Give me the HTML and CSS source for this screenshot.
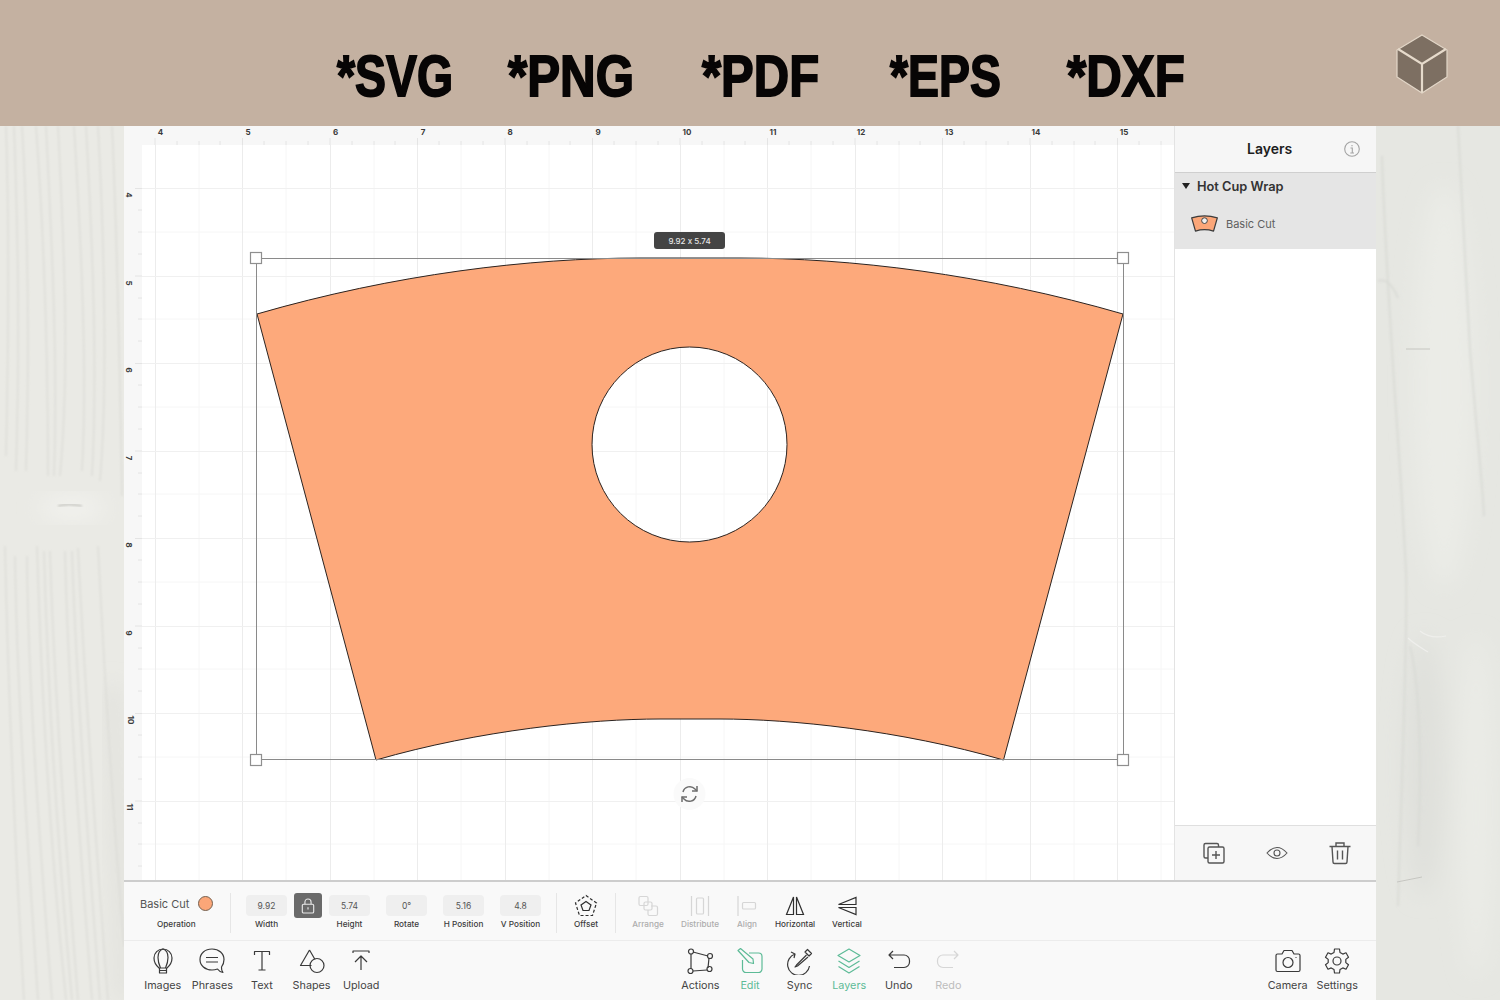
FILE: index.html
```html
<!DOCTYPE html>
<html lang="en">
<head>
<meta charset="utf-8">
<title>Hot Cup Wrap</title>
<link rel="stylesheet" href="styles.css">
</head>
<body>
<header class="banner">
  <span class="format format-svg">*SVG</span>
  <span class="format format-png">*PNG</span>
  <span class="format format-pdf">*PDF</span>
  <span class="format format-eps">*EPS</span>
  <span class="format format-dxf">*DXF</span>
  <svg class="cube" viewBox="0 0 54 60" width="54" height="60">
    <path d="M27 1 52 16 52 43 27 59 2 43 2 16Z" fill="#7d6f62"/>
    <path d="M3 15 27 30 51 15M27 30V59" fill="none" stroke="#e6dacb" stroke-width="2.200"/>
    <path d="M27 1 52 16 52 43 27 59 2 43 2 16Z" fill="none" stroke="#e3d7c8" stroke-width="1.200"/>
  </svg>
</header>
<main class="stage">
  <div class="wood">
    <svg class="wood-art" width="124" height="874" viewBox="0 0 124 874">
      <defs>
        <filter id="soft" x="-20%" y="-5%" width="140%" height="110%"><feGaussianBlur stdDeviation="1.100"/></filter>
        <filter id="soft-wide" x="-80%" y="-20%" width="260%" height="140%"><feGaussianBlur stdDeviation="11"/></filter>
      </defs>
      <rect width="124" height="874" fill="#eaeae5"/>
      <g class="grain" filter="url(#soft)">
        <path d="M6 0C10 120 8 240 6 330M5 420C8 560 14 700 24 874"/>
        <path d="M14 0C18 110 20 210 16 345M15 430C17 570 28 720 38 874"/>
        <path d="M22 0C28 100 30 200 26 345M27 430C28 560 40 720 52 874"/>
        <path d="M36 0C44 110 48 220 48 350M37 420C40 520 48 700 66 874"/>
        <path d="M46 0C52 120 58 240 54 350M44 425C47 540 56 700 72 874"/>
        <path d="M58 0C64 120 70 240 60 350M50 425C54 560 66 720 78 874"/>
        <path d="M74 0C80 100 88 240 82 345M65 425C68 560 80 720 92 874"/>
        <path d="M86 0C92 110 98 240 92 350M72 425C76 550 88 720 100 874"/>
        <path d="M98 0C104 110 108 260 100 355M78 422C84 540 96 720 108 874"/>
        <path d="M112 0C118 130 120 260 122 370M98 420C104 540 114 700 124 820"/>
      </g>
      <path class="grain-shade" d="M112 560C118 660 122 760 124 874" filter="url(#soft-wide)"/>
      <ellipse class="knot-light" cx="72" cy="382" rx="32" ry="12" filter="url(#soft-wide)"/>
      <path class="knot" d="M58 380C64 378 74 378 82 380" filter="url(#soft)"/>
    </svg>
  </div>
  <section class="app">
    <div class="workspace">
      <div class="canvas">
        <svg class="canvas-art" width="1050" height="754" viewBox="124 126 1050 754">
          <rect x="124" y="126" width="1050" height="754" fill="#f7f7f7"/>
          <rect x="142" y="145" width="1032" height="735" fill="#fff"/>
          <g class="grid-minor">
            <path d="M199 145V880M286 145V880M374 145V880M461 145V880M549 145V880M636 145V880M724 145V880M811 145V880M899 145V880M986 145V880M1074 145V880M1161 145V880"/>
            <path d="M142 232H1174M142 319H1174M142 407H1174M142 494H1174M142 582H1174M142 669H1174M142 757H1174M142 844H1174"/>
          </g>
          <g class="grid-major">
            <path d="M155.500 145V880M242.500 145V880M330.500 145V880M417.500 145V880M505.500 145V880M592.500 145V880M680.500 145V880M767.500 145V880M855.500 145V880M942.500 145V880M1030.500 145V880M1117.500 145V880"/>
          </g>
          <g class="grid-rows">
            <path d="M142 188.500H1174M142 276.500H1174M142 363.500H1174M142 451.500H1174M142 538.500H1174M142 626.500H1174M142 713.500H1174M142 801.500H1174"/>
          </g>
          <g class="ticks">
            <path d="M155 138V145M177 141V145M199 141V145M220 141V145M242.500 138V145M264 141V145M286 141V145M308 141V145M330 138V145M352 141V145M374 141V145M395 141V145M417.500 138V145M439 141V145M461 141V145M483 141V145M505 138V145M527 141V145M549 141V145M570 141V145M592.500 138V145M614 141V145M636 141V145M658 141V145M680 138V145M702 141V145M724 141V145M745 141V145M767.500 138V145M789 141V145M811 141V145M833 141V145M855 138V145M877 141V145M899 141V145M920 141V145M942.500 138V145M964 141V145M986 141V145M1008 141V145M1030 138V145M1052 141V145M1074 141V145M1095 141V145M1117.500 138V145M1139 141V145M1161 141V145"/>
            <path d="M135 188.500H142M138 210H142M138 232H142M138 254H142M135 276H142M138 298H142M138 319H142M138 341H142M135 363.500H142M138 385H142M138 407H142M138 429H142M135 451H142M138 473H142M138 494H142M138 516H142M135 538.500H142M138 560H142M138 582H142M138 604H142M135 626H142M138 648H142M138 669H142M138 691H142M135 713.500H142M138 735H142M138 757H142M138 779H142M135 801H142M138 823H142M138 844H142M138 866H142"/>
          </g>
          <g class="ruler-x">
            <text x="160.500" y="135">4</text><text x="248" y="135">5</text><text x="335.500" y="135">6</text><text x="423" y="135">7</text><text x="510" y="135">8</text><text x="598" y="135">9</text><text x="687" y="135">10</text><text x="773" y="135">11</text><text x="861" y="135">12</text><text x="949" y="135">13</text><text x="1036" y="135">14</text><text x="1124" y="135">15</text>
          </g>
          <g class="ruler-y">
            <text transform="translate(126 195) rotate(90)">4</text><text transform="translate(126 283) rotate(90)">5</text><text transform="translate(126 370) rotate(90)">6</text><text transform="translate(126 458) rotate(90)">7</text><text transform="translate(126 545) rotate(90)">8</text><text transform="translate(126 633) rotate(90)">9</text><text transform="translate(128 720) rotate(90)">10</text><text transform="translate(127 807) rotate(90)">11</text>
          </g>
          <path class="wrap" fill-rule="evenodd" d="M257 314C395 274 530 258 640 258H740C850 258 985 274 1123 314L1003.500 760C900 730 790 719 720 719H660C590 719 480 730 376 760ZM592 444.500A97.500 97.500 0 1 0 787 444.500A97.500 97.500 0 1 0 592 444.500Z"/>
          <g class="frame">
            <rect x="256.500" y="258.500" width="867" height="501"/>
            <rect class="handle" x="250.500" y="252.500" width="11" height="11"/>
            <rect class="handle" x="1117.500" y="252.500" width="11" height="11"/>
            <rect class="handle" x="250.500" y="754.500" width="11" height="11"/>
            <rect class="handle" x="1117.500" y="754.500" width="11" height="11"/>
          </g>
          <rect class="size-chip" x="654" y="232" width="71" height="17" rx="3"/>
          <text class="size-text" x="689.500" y="243.800">9.92 x 5.74</text>
          <circle class="rotate-halo" cx="689.500" cy="794" r="16"/>
          <g class="rotate-icon">
            <path d="M683 792A7 7 0 0 1 695 789L697 791M696 796A7 7 0 0 1 684 799L682 797"/>
            <path d="M697 786V791H692M682 802V797H687"/>
          </g>
        </svg>
      </div>
      <aside class="layers">
        <div class="layers-head">
          <h2 class="layers-title">Layers</h2>
          <svg class="info" viewBox="0 0 16 16" width="16" height="16">
            <circle cx="8" cy="8" r="7.300"/>
            <path d="M6.500 7H8.300V12M6.300 12H10M8 4V5.200"/>
          </svg>
        </div>
        <div class="group">
          <div class="group-row"><span class="caret"></span><span class="group-name">Hot Cup Wrap</span></div>
          <div class="layer-row">
            <svg viewBox="0 0 30 20" width="29" height="19">
              <path d="M1.500 4C10 1.500 20 1.500 28.500 4L24.500 18C18 16 12 16 5.500 18Z" fill="#fba678" stroke="#3b3b3b" stroke-width="1.300" stroke-linejoin="round"/>
              <circle cx="15" cy="7" r="3" fill="#f1f1f1" stroke="#3b3b3b" stroke-width="1"/>
            </svg>
            <span class="layer-name">Basic Cut</span>
          </div>
        </div>
        <div class="layers-empty"></div>
        <div class="layers-foot">
          <svg class="icon" viewBox="0 0 24 24" width="24" height="24">
            <path d="M6 17H3.500A1.500 1.500 0 0 1 2 15.500V4A1.500 1.500 0 0 1 3.500 2.500H15A1.500 1.500 0 0 1 16.500 4V6"/>
            <rect x="6" y="6" width="16" height="16" rx="1.500"/>
            <path d="M14 10V18M10 14H18"/>
          </svg>
          <svg class="icon icon-eye" viewBox="0 0 24 24" width="24" height="24">
            <path d="M2 12C6 7.500 9 6.500 12 6.500S18 7.500 22 12C18 16.500 15 17.500 12 17.500S6 16.500 2 12Z"/>
            <circle cx="12" cy="12" r="3"/>
          </svg>
          <svg class="icon" viewBox="0 0 24 24" width="24" height="24">
            <path d="M1.500 5.500H22.500M8 5.500V2H16V5.500M4 5.500 5 21A1.500 1.500 0 0 0 6.500 22.500H17.500A1.500 1.500 0 0 0 19 21L20 5.500M9.500 9.500V18.500M14.500 9.500V18.500"/>
          </svg>
        </div>
      </aside>
    </div>
    <div class="edit-bar">
      <div class="operation">
        <div class="op-top"><span class="op-name">Basic Cut</span><span class="op-dot"></span></div>
        <span class="tool-label op-label">Operation</span>
      </div>
      <span class="divider"></span>
      <div class="fields">
        <div class="size-fields">
          <div class="field"><span class="field-box">9.92</span><span class="tool-label">Width</span></div>
          <span class="lock">
            <svg viewBox="0 0 16 18" width="14" height="16">
              <rect x="1.500" y="7" width="13" height="10" rx="1.500"/>
              <path d="M4.500 7V4.500A3.500 3.500 0 0 1 11.500 4.500V7M8 10.500V13"/>
            </svg>
          </span>
          <div class="field"><span class="field-box">5.74</span><span class="tool-label">Height</span></div>
        </div>
        <div class="field"><span class="field-box">0°</span><span class="tool-label">Rotate</span></div>
        <div class="field"><span class="field-box">5.16</span><span class="tool-label">H Position</span></div>
        <div class="field"><span class="field-box">4.8</span><span class="tool-label">V Position</span></div>
      </div>
      <span class="divider"></span>
      <div class="tool tool-offset">
        <svg class="tool-icon" viewBox="0 0 24 24" width="24" height="24">
          <path d="M12 7.500 17 11 15 16.500H9L7 11Z"/>
          <path class="dash" d="M12 1.500 22.500 9 18.500 21.500H5.500L1.500 9Z"/>
        </svg>
        <span class="tool-label">Offset</span>
      </div>
      <span class="divider"></span>
      <div class="tool tool-arrange off">
        <svg class="tool-icon" viewBox="0 0 24 24" width="24" height="24">
          <rect x="3" y="2.500" width="9" height="9" rx="1.500"/><rect x="8" y="8" width="8" height="8" rx="1.500"/><path d="M15 12H20A1.500 1.500 0 0 1 21.500 13.500V20A1.500 1.500 0 0 1 20 21.500H13.500A1.500 1.500 0 0 1 12 20V16"/>
        </svg>
        <span class="tool-label">Arrange</span>
      </div>
      <div class="tool tool-distribute off">
        <svg class="tool-icon" viewBox="0 0 24 24" width="24" height="24">
          <path d="M3.500 2V22M20.500 2V22"/><rect x="8.500" y="4" width="7" height="16" rx="1"/>
        </svg>
        <span class="tool-label">Distribute</span>
      </div>
      <div class="tool tool-align off">
        <svg class="tool-icon" viewBox="0 0 24 24" width="24" height="24">
          <path d="M3 2V22"/><rect x="7.500" y="8.500" width="13" height="6.500" rx="1"/>
        </svg>
        <span class="tool-label">Align</span>
      </div>
      <div class="tool tool-horizontal">
        <svg class="tool-icon" viewBox="0 0 24 24" width="24" height="24">
          <path d="M10.500 3V20.500H3.500ZM13.500 3V20.500H20.500Z"/>
        </svg>
        <span class="tool-label">Horizontal</span>
      </div>
      <div class="tool tool-vertical">
        <svg class="tool-icon" viewBox="0 0 24 24" width="24" height="24">
          <path d="M21 3.500V10.500L3.500 10.500ZM21 20.500V13.500H3.500Z"/>
        </svg>
        <span class="tool-label">Vertical</span>
      </div>
    </div>
    <nav class="nav-bar">
      <div class="nav-group">
        <div class="nav-item">
          <svg class="nav-icon" viewBox="0 0 28 28" width="28" height="28">
            <path d="M10 21C6.500 18 5 14.500 5 11A9 9 0 0 1 23 11C23 14.500 21.500 18 18 21H10Z"/>
            <path d="M11.500 21C9.700 17 9 14 9 10.500S10.500 3 14 2C17.500 3 19 7 19 10.500S18.300 17 16.500 21"/>
            <path d="M10.500 21V26H17.500V21M10.500 23.500H17.500"/>
          </svg>
          <span class="nav-label">Images</span>
        </div>
        <div class="nav-item">
          <svg class="nav-icon" viewBox="0 0 28 28" width="28" height="28">
            <path d="M14 2C7 2 2 6.500 2 12.500S7 23 14 23C16 23 18 22.600 19.500 22C20.500 23.500 22.500 25 25 25.500 23.800 24 23.300 22 23.500 20C25 18 26 15.500 26 12.500 26 6.500 21 2 14 2Z"/>
            <path d="M8 10.500H20M8 15H20"/>
          </svg>
          <span class="nav-label">Phrases</span>
        </div>
        <div class="nav-item">
          <svg class="nav-icon" viewBox="0 0 28 28" width="28" height="28">
            <path d="M6.500 8V4.500H21.500V8M14 4.500V23M10.500 23H17.500"/>
          </svg>
          <span class="nav-label">Text</span>
        </div>
        <div class="nav-item">
          <svg class="nav-icon" viewBox="0 0 28 28" width="28" height="28">
            <path d="M11.500 3 2.500 18.500H13.500M11.500 3 17 12.500"/>
            <circle cx="19" cy="18.500" r="7"/>
          </svg>
          <span class="nav-label">Shapes</span>
        </div>
        <div class="nav-item">
          <svg class="nav-icon" viewBox="0 0 28 28" width="28" height="28">
            <path d="M6 6V4H22V6M14 23V9M8 15 14 9 20 15"/>
          </svg>
          <span class="nav-label">Upload</span>
        </div>
      </div>
      <div class="nav-group">
        <div class="nav-item">
          <svg class="nav-icon" viewBox="0 0 28 28" width="28" height="28">
            <path d="M7 5 22 9M5 7V22M23 11 22 21M7 24 21 23"/>
            <circle cx="5" cy="4.500" r="2.500"/><circle cx="24" cy="9" r="2.500"/><circle cx="4.500" cy="24" r="2.500"/><circle cx="23.500" cy="22" r="2.500"/>
          </svg>
          <span class="nav-label">Actions</span>
        </div>
        <div class="nav-item active">
          <svg class="nav-icon" viewBox="0 0 28 28" width="28" height="28">
            <path d="M13 6H22.500A3.500 3.500 0 0 1 26 9.500V22A3.500 3.500 0 0 1 22.500 25.500H10A3.500 3.500 0 0 1 6.500 22V13"/>
            <path d="M2 3.500 4.500 1.500 17 12 17.500 16.500 13 15.500Z"/>
          </svg>
          <span class="nav-label">Edit</span>
        </div>
        <div class="nav-item">
          <svg class="nav-icon" viewBox="0 0 28 28" width="28" height="28">
            <path d="M9 7A11 11 0 1 0 23.500 19M5 5 9 7 8 11"/>
            <path d="M21.500 2.500 25.500 6.500 23 9 19 5ZM20.500 8 10.500 18 9 20 11.500 19 22 10"/>
          </svg>
          <span class="nav-label">Sync</span>
        </div>
        <div class="nav-item active">
          <svg class="nav-icon" viewBox="0 0 28 28" width="28" height="28">
            <path d="M14 2 25 8.500 14 15 3 8.500Z"/>
            <path d="M3.500 14 14 20.500 24.500 14M3.500 19.500 14 26 24.500 19.500"/>
          </svg>
          <span class="nav-label">Layers</span>
        </div>
        <div class="nav-item">
          <svg class="nav-icon" viewBox="0 0 28 28" width="28" height="28">
            <path d="M8 4 4 8 8 12M4 8H19A5.500 5.500 0 0 1 24.500 13.500V15A5.500 5.500 0 0 1 19 20.500H9"/>
          </svg>
          <span class="nav-label">Undo</span>
        </div>
        <div class="nav-item off">
          <svg class="nav-icon" viewBox="0 0 28 28" width="28" height="28">
            <path d="M20 4 24 8 20 12M24 8H9A5.500 5.500 0 0 0 3.500 13.500V15A5.500 5.500 0 0 0 9 20.500H19"/>
          </svg>
          <span class="nav-label">Redo</span>
        </div>
      </div>
      <div class="nav-group">
        <div class="nav-item">
          <svg class="nav-icon" viewBox="0 0 28 28" width="28" height="28">
            <path d="M3.500 7H8L10 3.500H18L20 7H24.500A1.500 1.500 0 0 1 26 8.500V23A1.500 1.500 0 0 1 24.500 24.500H3.500A1.500 1.500 0 0 1 2 23V8.500A1.500 1.500 0 0 1 3.500 7Z"/>
            <circle cx="14" cy="15.500" r="5"/><path d="M21.500 10.500H22.500"/>
          </svg>
          <span class="nav-label">Camera</span>
        </div>
        <div class="nav-item">
          <svg class="nav-icon" viewBox="0 0 28 28" width="28" height="28">
            <path d="M11.500 2H16.500L17 5.500 19.800 7.100 23 5.800 25.500 10.200 22.800 12.400V15.600L25.500 17.800 23 22.200 19.800 20.900 17 22.500 16.500 26H11.500L11 22.500 8.200 20.900 5 22.200 2.500 17.800 5.200 15.600V12.400L2.500 10.200 5 5.800 8.200 7.100 11 5.500Z"/>
            <circle cx="14" cy="14" r="4"/>
          </svg>
          <span class="nav-label">Settings</span>
        </div>
      </div>
    </nav>
  </section>
  <div class="wood">
    <svg class="wood-art" width="124" height="874" viewBox="0 0 124 874">
      <rect width="124" height="874" fill="#e6e7e2"/>
      <g filter="url(#soft-wide)">
        <ellipse class="wood-pale" cx="68" cy="260" rx="30" ry="200"/>
        <ellipse class="wood-shade" cx="48" cy="640" rx="20" ry="130"/>
        <ellipse class="wood-pale" cx="100" cy="680" rx="16" ry="170"/>
      </g>
      <g class="grain-right" filter="url(#soft)">
        <path d="M6 30C8 100 14 190 17 240C20 290 24 330 30 445C32 500 26 650 22 780"/>
        <path d="M82 0C86 80 90 160 94 223C100 300 106 350 108 390"/>
        <path d="M34 520C44 560 46 640 42 720"/>
        <path d="M2 155C10 152 16 158 22 172"/>
      </g>
      <path class="scratch" d="M30 223H54M21 756 46 751"/>
      <path class="scratch-light" d="M32 512C38 518 46 522 52 526M44 505C50 510 60 512 70 510"/>
    </svg>
  </div>
</main>
</body>
</html>
```
FILE: styles.css
```css
* { box-sizing: border-box; }
html, body { margin: 0; padding: 0; }
body {
  width: 1500px;
  height: 1000px;
  overflow: hidden;
  display: flex;
  flex-direction: column;
  background: #e9e8e3;
  font-family: Inter, "Liberation Sans", sans-serif;
  color: #333;
}
svg { display: block; }

/* banner */
.banner {
  height: 126px;
  flex: none;
  background: #c4b1a1;
  padding-left: 337px;
  display: grid;
  grid-template-columns: 171px 194px 188px 177px 329px 54px;
  align-items: center;
}
.format {
  font-family: "Liberation Sans", Arial, sans-serif;
  font-weight: 700;
  font-size: 58px;
  line-height: 1;
  color: #070505;
  white-space: nowrap;
  -webkit-text-stroke: 1.800px #070505;
  transform-origin: left center;
  padding-top: 25px;
}
.format-svg { transform: scaleX(0.8); }
.format-png { transform: scaleX(0.85); }
.format-pdf { transform: scaleX(0.845); }
.format-eps { transform: scaleX(0.8); }
.format-dxf { transform: scaleX(0.85); }
.cube { margin-left: -1px; margin-top: 2px; }

/* frame */
.stage { flex: 1; display: flex; min-height: 0; }
.wood { width: 124px; flex: none; overflow: hidden; }
.grain path { fill: none; stroke: #d7d7d2; stroke-width: 1.300; opacity: 0.8; }
.grain-shade { fill: none; stroke: #dcdcd7; stroke-width: 10; }
.knot-light { fill: #f2f2ee; }
.knot { fill: none; stroke: #b0b0aa; stroke-width: 1.200; }
.wood-pale { fill: #ebece7; }
.wood-shade { fill: #dfe0db; }
.grain-right path { fill: none; stroke: #d8d9d4; stroke-width: 2; opacity: 0.8; }
.scratch { fill: none; stroke: #c6c6c1; stroke-width: 1; }
.scratch-light { fill: none; stroke: #efefec; stroke-width: 1.200; }
.app { width: 1252px; flex: none; display: flex; flex-direction: column; background: #f9f9f9; }
.workspace { height: 754px; flex: none; display: flex; }
.canvas { width: 1050px; flex: none; }

/* canvas */
.grid-minor path { fill: none; stroke: #f6f6f6; stroke-width: 1; }
.grid-major path { fill: none; stroke: #ececec; stroke-width: 1; }
.grid-rows path { fill: none; stroke: #f0f0f0; stroke-width: 1; }
.ticks path { fill: none; stroke: #e4e4e4; stroke-width: 1; }
.ruler-x text, .ruler-y text {
  font-family: Inter, "Liberation Sans", sans-serif;
  font-size: 8px;
  font-weight: 700;
  fill: #3a3a3a;
  text-anchor: middle;
}
.wrap { fill: #fda97b; stroke: #2b2320; stroke-width: 1; }
.frame rect { fill: none; stroke: #8a8a8a; stroke-width: 1; }
.frame .handle { fill: #fff; stroke: #8f8f8f; stroke-width: 1.200; }
.size-chip { fill: #444; }
.size-text {
  font-family: Inter, "Liberation Sans", sans-serif;
  font-size: 8px;
  font-weight: 500;
  fill: #e6e6e6;
  text-anchor: middle;
  font-variant-ligatures: none;
  font-feature-settings: "calt" 0;
}
.rotate-halo { fill: #fafafa; }
.rotate-icon path { fill: none; stroke: #6d6d6d; stroke-width: 1.500; }

/* layers */
.layers { width: 202px; flex: none; display: flex; flex-direction: column; background: #fff; border-left: 1px solid #e3e3e3; }
.layers-head { height: 47px; flex: none; background: #f6f6f6; border-bottom: 1px solid #cfcfcf; display: flex; align-items: center; padding: 0 16px 0 72px; justify-content: space-between; }
.layers-title { margin: 0; font-size: 14px; font-weight: 600; color: #1d1d1d; line-height: 1; }
.info circle, .info path { fill: none; stroke: #a3a3a3; stroke-width: 1.100; }
.group { height: 76px; flex: none; background: #e5e5e5; display: flex; flex-direction: column; }
.group-row { height: 26px; display: flex; align-items: center; padding-left: 7px; gap: 7px; }
.caret { width: 0; height: 0; border-left: 4px solid transparent; border-right: 4px solid transparent; border-top: 6px solid #222; }
.group-name { font-size: 12.800px; font-weight: 600; color: #333; white-space: nowrap; }
.layer-row { flex: 1; display: flex; align-items: center; gap: 7px; padding: 0 0 1px 15px; }
.layer-name { font-size: 11px; color: #5f5f5f; }
.layers-empty { flex: 1; }
.layers-foot { height: 55px; flex: none; background: #f7f7f7; border-top: 1px solid #dfdfdf; display: flex; align-items: center; justify-content: space-between; padding: 0 24px 0 27px; }
.icon path, .icon rect, .icon circle { fill: none; stroke: #555; stroke-width: 1.400; }
.icon-eye path, .icon-eye circle { stroke-width: 1.100; }

/* edit bar */
.edit-bar { height: 61px; flex: none; border-top: 2px solid #cdcdcd; border-bottom: 1px solid #ececec; display: flex; align-items: flex-start; padding: 13px 0 0 16px; gap: 15px; }
.operation { width: 75px; flex: none; display: flex; flex-direction: column; gap: 6px; }
.op-top { display: flex; align-items: center; gap: 9px; width: 75px; height: 17px; }
.op-name { font-size: 11px; color: #555; white-space: nowrap; }
.op-dot { width: 15px; height: 15px; border-radius: 50%; background: #fba678; border: 1px solid #75604f; flex: none; }
.op-label { align-self: flex-start; margin-left: 17px; }
.divider { width: 1px; height: 40px; background: #e6e6e6; flex: none; margin-top: -2px; }
.fields { display: flex; gap: 16px; }
.size-fields { display: flex; gap: 7px; }
.field { width: 41px; display: flex; flex-direction: column; align-items: center; gap: 2px; }
.field-box { width: 41px; height: 21px; border-radius: 4px; background: #efefef; font-size: 8.500px; color: #555; display: flex; align-items: center; justify-content: center; }
.tool-label { font-size: 8.200px; font-weight: 500; line-height: 12px; color: #3c3c3c; white-space: nowrap; }
.lock { width: 28px; height: 25px; border-radius: 3px; background: #6a6a6a; display: flex; align-items: center; justify-content: center; margin-top: -2px; }
.lock rect, .lock path { fill: none; stroke: #e8e8e8; stroke-width: 1.300; }
.tool { display: flex; flex-direction: column; align-items: center; flex: none; margin-top: -1px; }
.tool-icon path, .tool-icon rect { fill: none; stroke: #2f2f2f; stroke-width: 1.200; }
.tool-icon .dash { stroke-dasharray: 3 2; }
.tool.off .tool-icon path, .tool.off .tool-icon rect { stroke: #d6d6d6; }
.tool.off .tool-label { color: #adadad; }
.tool-offset { width: 28px; }
.tool-arrange { width: 34px; }
.tool-distribute { width: 40px; }
.tool-align { width: 24px; }
.tool-horizontal { width: 42px; }
.tool-vertical { width: 32px; }

/* nav bar */
.nav-bar { flex: 1; display: flex; justify-content: space-between; padding: 0 14px; }
.nav-group { display: flex; }
.nav-item { width: 49.600px; display: flex; flex-direction: column; align-items: center; padding-top: 6px; gap: 4px; }
.nav-icon path, .nav-icon circle { fill: none; stroke: #3a3a3a; stroke-width: 1.200; stroke-linejoin: round; }
.nav-label { font-size: 10.800px; line-height: 14px; color: #444; white-space: nowrap; }
.nav-item.active .nav-icon path { stroke: #5dbb97; }
.nav-item.active .nav-label { color: #5dbb97; }
.nav-item.off .nav-icon path { stroke: #d6d6d6; }
.nav-item.off .nav-label { color: #bdbdbd; }
```
